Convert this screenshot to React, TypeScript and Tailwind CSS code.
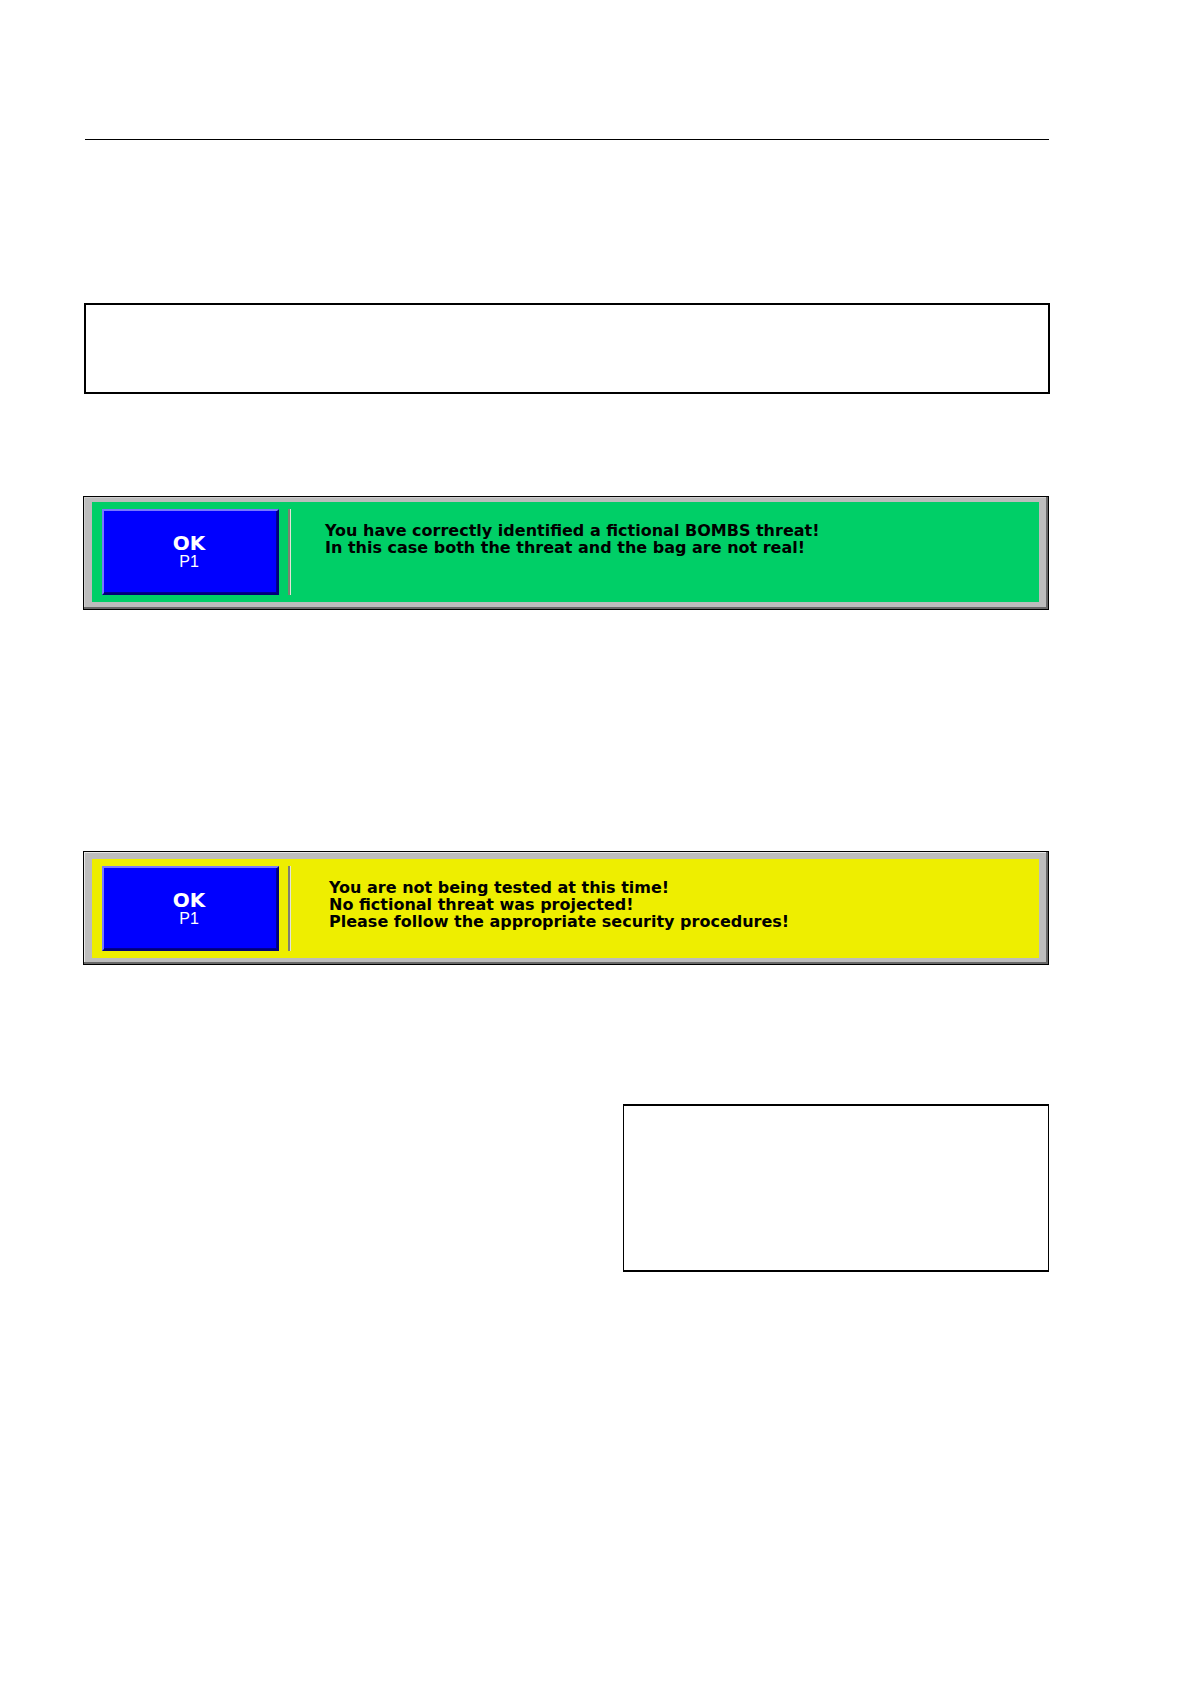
type PanelProps = {
  id: string;
  lines: string[];
  frame: string;
  surface: string;
  message: string;
};

function MessagePanel({ id, lines, frame, surface, message }: PanelProps) {
  return (
    <section
      aria-labelledby={id}
      className={`border border-black bg-[#bdbdbd] ${frame}`}
    >
      <div className={`flex h-full items-stretch py-[7px] pl-[10px] ${surface}`}>
        <button
          type="button"
          className="flex w-[177px] shrink-0 flex-col items-center justify-center border-2 border-t-[#7878ff] border-r-[#000078] border-b-[#000078] border-l-[#7878ff] bg-[#0000ff] pr-[3px] pb-px text-white shadow-[inset_-1px_-1px_0_#000090]"
        >
          <span className="font-['DejaVu_Sans',sans-serif] text-[20px] leading-[20px] font-bold">OK</span>
          <span className="font-['Liberation_Sans',sans-serif] text-[16px] leading-[17px]">P1</span>
        </button>
        <div className="ml-[9px] w-[3px] shrink-0 border-r border-l-2 border-r-[#e4e4d8] border-l-[#808070]" />
        <p
          id={id}
          className={`pt-[13px] font-['DejaVu_Sans',sans-serif] text-[16px] leading-[17px] font-bold whitespace-nowrap text-black ${message}`}
        >
          {lines.map((line) => (
            <span key={line} className="block">
              {line}
            </span>
          ))}
        </p>
      </div>
    </section>
  );
}

export default function App() {
  return (
    <main className="min-h-screen bg-white pt-[139px] pr-[141px] pb-16 pl-[83px]">
      <hr className="ml-[2px] border-t border-black" />

      <div className="mt-[163px] -mr-px ml-px h-[91px] border-2 border-black" />

      <div className="mt-[102px]">
        <MessagePanel
          id="threat-identified"
          lines={[
            "You have correctly identified a fictional BOMBS threat!",
            "In this case both the threat and the bag are not real!",
          ]}
          frame="h-[114px] pt-[5px] pr-[9px] pb-[7px] pl-[8px] shadow-[inset_-2px_-2px_0_#686868,inset_1px_1px_0_#d0d0d0]"
          surface="bg-[#00cf67]"
          message="ml-[34px]"
        />
      </div>

      <div className="mt-[241px]">
        <MessagePanel
          id="not-tested"
          lines={[
            "You are not being tested at this time!",
            "No fictional threat was projected!",
            "Please follow the appropriate security procedures!",
          ]}
          frame="h-[114px] pt-[7px] pr-[9px] pb-[6px] pl-[8px] shadow-[inset_-2px_-2px_0_#686868,inset_1px_1px_0_#e8e8e8]"
          surface="bg-[#eeee00]"
          message="ml-[38px]"
        />
      </div>

      <div className="mt-[139px] ml-[540px] h-[168px] border-x border-y-2 border-black" />
    </main>
  );
}
